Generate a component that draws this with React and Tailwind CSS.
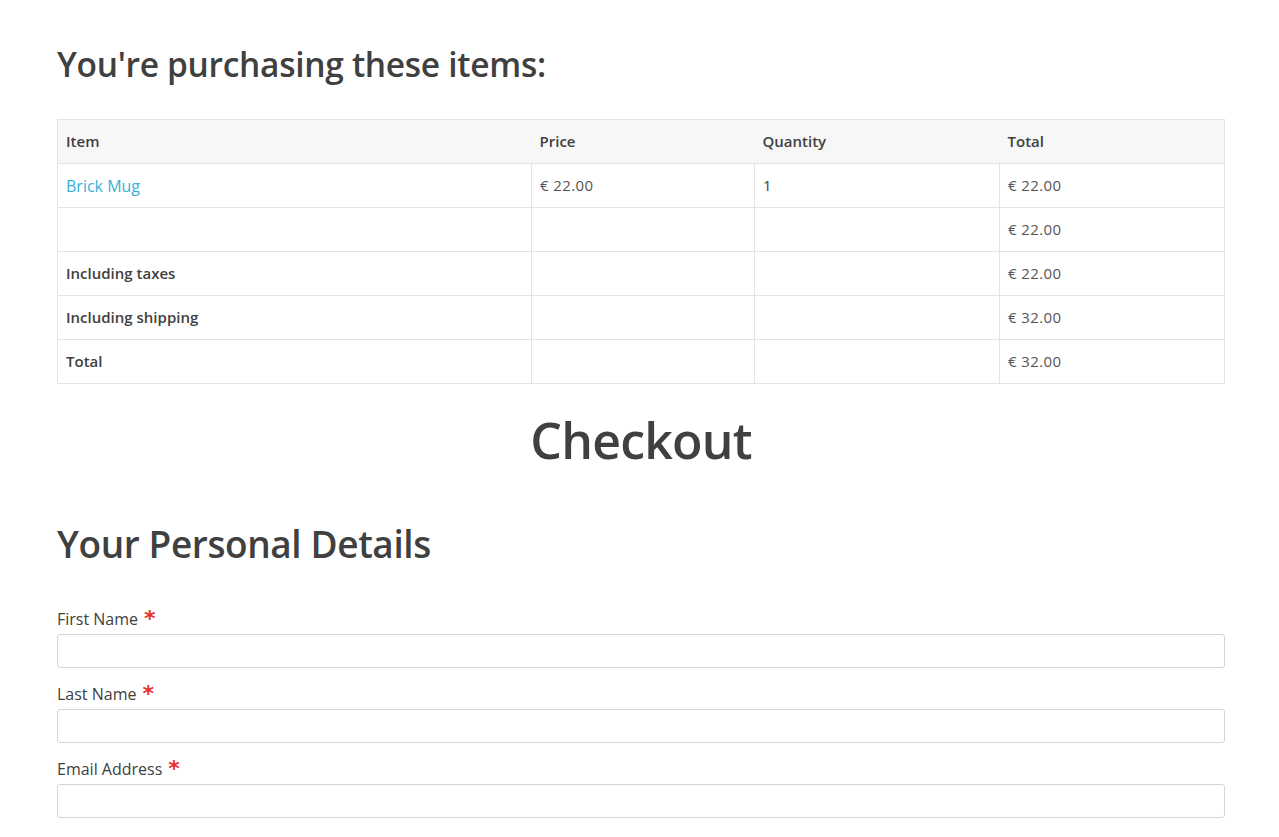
import React from 'react'

const rows = [
  { item: 'Brick Mug', link: true, price: '€ 22.00', qty: '1', total: '€ 22.00' },
  { item: '', price: '', qty: '', total: '€ 22.00' },
  { item: 'Including taxes', bold: true, price: '', qty: '', total: '€ 22.00' },
  { item: 'Including shipping', bold: true, price: '', qty: '', total: '€ 32.00' },
  { item: 'Total', bold: true, price: '', qty: '', total: '€ 32.00' },
]

function Field({ label }) {
  return (
    <div className="flex flex-col">
      <label className="flex items-center gap-[6px] text-[16px] font-medium leading-[24px] text-[#404040]">
        {label}
        <span className="text-[#e9322d] font-bold text-[22px] leading-none" style={{ fontFamily: '"DejaVu Sans", sans-serif' }}>*</span>
      </label>
      <input className="mt-[3px] h-[34px] w-full rounded-[3px] border border-[#d4d4d4] bg-white" />
    </div>
  )
}

export default function App() {
  return (
    <div className="min-h-screen bg-white text-[#404040]" style={{ fontFamily: '"Open Sans", Lato, sans-serif' }}>
      <div className="ml-[57px] w-[1168px] pt-[40px]">
        <h2 className="text-[33.5px] font-semibold leading-[48px] tracking-[-0.3px]">You're purchasing these items:</h2>

        <table className="mt-[31px] w-full border-collapse border border-[#e4e4e4] text-[15px]">
          <thead>
            <tr className="h-[44px] bg-[#f7f7f7] text-left">
              <th className="w-[474px] px-2 font-semibold">Item</th>
              <th className="w-[223px] px-2 font-semibold">Price</th>
              <th className="w-[245px] px-2 font-semibold">Quantity</th>
              <th className="px-2 font-semibold">Total</th>
            </tr>
          </thead>
          <tbody>
            {rows.map((r, i) => (
              <tr key={i} className="h-[44px]">
                <td className={`border border-[#e4e4e4] px-2 ${r.bold ? 'font-semibold' : ''} ${r.link ? 'text-[16px] text-[#3bafda]' : ''}`}>
                  {r.item}
                </td>
                <td className="border border-[#e4e4e4] px-2 text-[15px] tracking-[0.4px] text-[#555]">{r.price}</td>
                <td className="border border-[#e4e4e4] px-2 text-[15px]">{r.qty}</td>
                <td className="border border-[#e4e4e4] px-2 text-[15px] tracking-[0.4px] text-[#555]">{r.total}</td>
              </tr>
            ))}
          </tbody>
        </table>

        <h1 className="mt-[22px] text-center text-[50px] font-semibold leading-[68px] tracking-[-0.8px]">Checkout</h1>

        <h2 className="mt-[44px] text-[37px] font-semibold leading-[52px] tracking-[-0.4px]">Your Personal Details</h2>

        <div className="mt-[37px] flex flex-col gap-[14px]">
          <Field label="First Name" />
          <Field label="Last Name" />
          <Field label="Email Address" />
        </div>
      </div>
    </div>
  )
}
